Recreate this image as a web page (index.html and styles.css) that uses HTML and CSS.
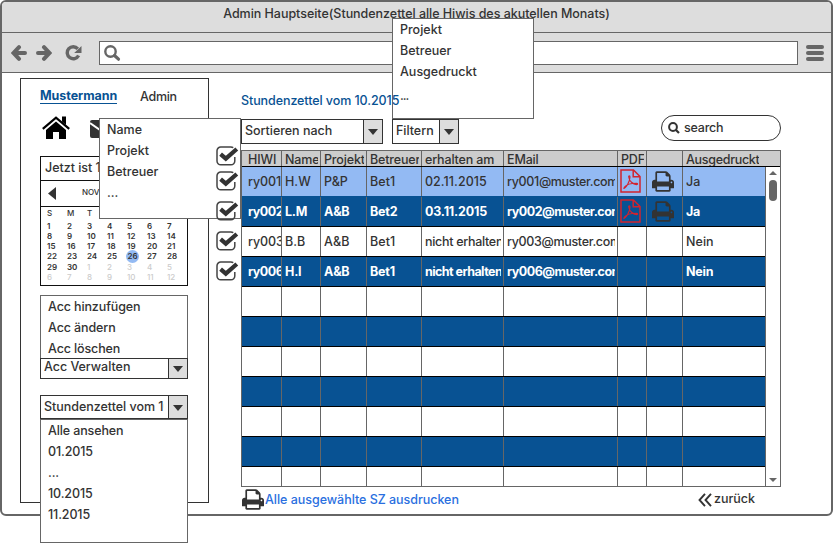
FILE: index.html
```html
<!DOCTYPE html>
<html lang="de">
<head>
<meta charset="utf-8">
<title>Admin Hauptseite</title>
<link rel="stylesheet" href="styles.css">
</head>
<body>
<svg class="defs" width="0" height="0">
  <symbol id="check" viewBox="0 0 23 20">
    <path d="M18.800 11v4a3.800 3.800 0 0 1-3.800 3.800H4.800A3.800 3.800 0 0 1 1 15V4.800A3.800 3.800 0 0 1 4.800 1h10q1.500 0 2.500.6" fill="none" stroke="#444" stroke-width="1.500"/>
    <path d="M4.600 8.200l5.200 4.500L20.800 3" fill="none" stroke="#333" stroke-width="4.200"/>
  </symbol>
  <symbol id="print" viewBox="0 128 1664 1536">
    <path fill="#333" d="M384 1536h896v-256h-896v256zm0-640h896v-384h-160q-40 0-68-28t-28-68v-160h-640v640zm1152 64q0-26-19-45t-45-19-45 19-19 45 19 45 45 19 45-19 19-45zm128 0v416q0 13-9.500 22.500t-22.500 9.500h-224v160q0 40-28 68t-68 28h-960q-40 0-68-28t-28-68v-160h-224q-13 0-22.500-9.500t-9.500-22.500v-416q0-79 56.500-135.500t135.500-56.500h64v-544q0-40 28-68t68-28h672q40 0 88 20t76 48l152 152q28 28 48 76t20 88v256h64q79 0 135.500 56.500t56.500 135.500z"/>
  </symbol>
  <symbol id="pdf" viewBox="0 0 21 24">
    <g fill="none" stroke="#d2232e">
      <path stroke-width="1.500" d="M1 1h12.500l6.500 6.500V23H1zM13.200 1v6.800H20"/>
      <path stroke-width="1.100" d="M4 19.500c1.500-.2 6-6.500 6-11.500 0-1.500-1.500-1.500-1.300 0 .5 4 4.300 7.500 7.800 7.600 1.500 0 1.500-1.200 0-1.300-4 0-10 1.200-12 3.700-.6.900-.8 1.500-.5 1.500z"/>
    </g>
  </symbol>
</svg>

<div class="window">
  <header class="titlebar"><span>Admin Hauptseite(Stundenzettel alle Hiwis des akutellen Monats)</span></header>
  <nav class="toolbar">
    <svg class="nav" width="16" height="16" viewBox="0 0 16 16"><path d="M14 8H3M8 2.200L2.500 8 8 13.800" fill="none" stroke="#666" stroke-width="4" stroke-linecap="round"/></svg>
    <svg class="nav next" width="16" height="16" viewBox="0 0 16 16"><path d="M2 8h11M8 2.200L13.500 8 8 13.800" fill="none" stroke="#666" stroke-width="4" stroke-linecap="round"/></svg>
    <svg class="nav reload" width="17" height="16" viewBox="0 0 17 16"><path d="M12.800 3.800A6 6 0 1 0 13.600 10.500" fill="none" stroke="#666" stroke-width="3.400"/><path d="M16.500 1v7H9.200z" fill="#666"/></svg>
    <div class="address"><svg width="18" height="17" viewBox="0 0 18 17"><circle cx="6.500" cy="6.500" r="5.200" fill="none" stroke="#666" stroke-width="2.400"/><path d="M10.500 10.500l4 3.700" stroke="#666" stroke-width="3.200" stroke-linecap="round"/></svg></div>
    <div class="burger"><i></i><i></i><i></i></div>
  </nav>

  <main class="content">
    <aside class="sidebar">
      <div class="user"><a class="name">Mustermann</a><span class="role">Admin</span></div>
      <div class="shortcuts">
        <svg width="28" height="24" viewBox="0 0 28 24"><path d="M14 5.500L24 14v9h-7v-7h-6v7H4v-9z"/><path d="M.8 12.800L14 1.600l13.200 11.200" fill="none" stroke="#000" stroke-width="2.200"/><path d="M20 .5h4v8.500l-4-3.500z"/></svg>
        <svg class="mail" width="26" height="18" viewBox="0 0 26 18"><rect width="26" height="18" rx="2" fill="#333"/><path d="M0 3l13 9 13-9" fill="none" stroke="#fff" stroke-width="2"/></svg>
      </div>
      <div class="calendar">
        <div class="now">Jetzt ist 1</div>
        <div class="month"><svg width="8" height="13" viewBox="0 0 8 13"><path d="M8 0v13L0 6.500z" fill="#333"/></svg><span>NOV</span></div>
        <div class="days">
          <b>S</b><b>M</b><b>T</b><b>W</b><b>T</b><b>F</b><b>S</b>
          <span>1</span><span>2</span><span>3</span><span>4</span><span>5</span><span>6</span><span>7</span>
          <span>8</span><span>9</span><span>10</span><span>11</span><span>12</span><span>13</span><span>14</span>
          <span>15</span><span>16</span><span>17</span><span>18</span><span>19</span><span>20</span><span>21</span>
          <span>22</span><span>23</span><span>24</span><span>25</span><span class="today">26</span><span>27</span><span>28</span>
          <span>29</span><span>30</span><span class="off">1</span><span class="off">2</span><span class="off">3</span><span class="off">4</span><span class="off">5</span>
          <span class="off">6</span><span class="off">7</span><span class="off">8</span><span class="off">9</span><span class="off">10</span><span class="off">11</span><span class="off">12</span>
        </div>
      </div>
      <ul class="list accounts"><li>Acc hinzufügen</li><li>Acc ändern</li><li>Acc löschen</li></ul>
      <div class="combo verwalten"><span>Acc Verwalten</span><i></i></div>
      <div class="combo period"><span>Stundenzettel vom 10.2015</span><i></i></div>
      <ul class="list periods"><li>Alle ansehen</li><li>01.2015</li><li>...</li><li>10.2015</li><li>11.2015</li></ul>
      <ul class="list menu sort-menu"><li>Name</li><li>Projekt</li><li>Betreuer</li><li>...</li></ul>
    </aside>

    <div class="checks">
      <svg><use href="#check"/></svg><svg><use href="#check"/></svg><svg><use href="#check"/></svg><svg><use href="#check"/></svg><svg><use href="#check"/></svg>
    </div>

    <section class="main">
      <h1>Stundenzettel vom 10.2015</h1>
      <div class="filters">
        <div class="combo sort"><span>Sortieren nach</span><i></i></div>
        <div class="combo filter"><span>Filtern</span><i></i>
          <ul class="list menu filter-menu"><li>Projekt</li><li>Betreuer</li><li>Ausgedruckt</li><li class="dots">...</li></ul>
        </div>
        <div class="search"><svg width="12" height="12" viewBox="0 0 12 12"><circle cx="5" cy="5" r="3.900" fill="none" stroke="#333" stroke-width="2"/><path d="M8 8l3 3" stroke="#333" stroke-width="2.200"/></svg><span>search</span></div>
      </div>
      <div class="table">
        <div class="row head"><div><span>HIWI</span></div><div><span>Name</span></div><div><span>Projekt</span></div><div><span>Betreuer</span></div><div><span>erhalten am</span></div><div><span>EMail</span></div><div><span>PDF</span></div><div></div><div><span>Ausgedruckt</span></div></div>
        <div class="grid">
          <div class="rows">
            <div class="row selected"><div><span>ry001</span></div><div><span>H.W</span></div><div><span>P&amp;P</span></div><div><span>Bet1</span></div><div><span>02.11.2015</span></div><div class="mailto"><span>ry001@muster.com</span></div><div class="ic"><svg class="pdf"><use href="#pdf"/></svg></div><div class="ic"><svg class="print"><use href="#print"/></svg></div><div><span>Ja</span></div></div>
            <div class="row dark"><div><span>ry002</span></div><div><span>L.M</span></div><div><span>A&amp;B</span></div><div><span>Bet2</span></div><div><span>03.11.2015</span></div><div class="mailto"><span>ry002@muster.com</span></div><div class="ic"><svg class="pdf"><use href="#pdf"/></svg></div><div class="ic"><svg class="print"><use href="#print"/></svg></div><div><span>Ja</span></div></div>
            <div class="row"><div><span>ry003</span></div><div><span>B.B</span></div><div><span>A&amp;B</span></div><div><span>Bet1</span></div><div class="pending"><span>nicht erhalten</span></div><div class="mailto"><span>ry003@muster.com</span></div><div></div><div></div><div><span>Nein</span></div></div>
            <div class="row dark"><div><span>ry006</span></div><div><span>H.I</span></div><div><span>A&amp;B</span></div><div><span>Bet1</span></div><div class="pending"><span>nicht erhalten</span></div><div class="mailto"><span>ry006@muster.com</span></div><div></div><div></div><div><span>Nein</span></div></div>
            <div class="row"><div></div><div></div><div></div><div></div><div></div><div></div><div></div><div></div><div></div></div>
            <div class="row dark"><div></div><div></div><div></div><div></div><div></div><div></div><div></div><div></div><div></div></div>
            <div class="row"><div></div><div></div><div></div><div></div><div></div><div></div><div></div><div></div><div></div></div>
            <div class="row dark"><div></div><div></div><div></div><div></div><div></div><div></div><div></div><div></div><div></div></div>
            <div class="row"><div></div><div></div><div></div><div></div><div></div><div></div><div></div><div></div><div></div></div>
            <div class="row dark"><div></div><div></div><div></div><div></div><div></div><div></div><div></div><div></div><div></div></div>
            <div class="row last"><div></div><div></div><div></div><div></div><div></div><div></div><div></div><div></div><div></div></div>
          </div>
          <div class="scroll"><i class="up"></i><i class="thumb"></i><i class="down"></i></div>
        </div>
      </div>
      <footer class="actions">
        <svg class="print"><use href="#print"/></svg><a class="all">Alle ausgewählte SZ ausdrucken</a>
        <a class="back"><svg width="14" height="14" viewBox="0 0 14 14"><path d="M7 .8L1.500 7 7 13.200M13 .8L7.500 7l5.500 6.200" fill="none" stroke="#333" stroke-width="1.900"/></svg><span>zurück</span></a>
      </footer>
    </section>
  </main>
</div>
</body>
</html>
```
FILE: styles.css
```css
* { box-sizing: border-box; }
body { margin: 0; width: 833px; height: 543px; overflow: hidden; background: #fff; color: #333; font: 500 12.5px/20px Inter, "Open Sans", sans-serif; letter-spacing: -.03px; white-space: nowrap; }
svg { display: block; flex: none; }
.defs { position: absolute; }
ul { list-style: none; margin: 0; padding: 0; }

.window { width: 833px; height: 516px; border: 2px solid #666; border-radius: 6px; background: #fff; }
.titlebar { height: 31px; background: #ddd; border-bottom: 1px solid #666; border-radius: 4px 4px 0 0; text-align: center; line-height: 23px; }
.toolbar { display: flex; align-items: center; height: 40px; background: #ddd; border-bottom: 1px solid #666; padding-left: 9px; }
.nav.next { margin-left: 9px; }
.nav.reload { margin-left: 13px; }
.address { width: 699px; height: 24px; margin-left: 17px; border: 1px solid #666; background: #fff; padding: 3px 0 0 4px; }
.burger { display: flex; flex-direction: column; gap: 2px; width: 18px; margin-left: 8px; }
.burger i { height: 4px; border-radius: 2px; background: #666; }

.content { display: flex; align-items: flex-start; }
.sidebar { position: relative; width: 189px; height: 425px; margin: 5px 0 0 18px; border: 1px solid #333; padding-left: 19px; }
.user { display: flex; height: 36px; align-items: flex-end; }
.name { color: #085293; font-weight: 700; line-height: 14px; height: 15px; margin-bottom: 11px; border-bottom: 1px solid #085293; width: 77px; letter-spacing: -.05px; }
.role { margin: 0 0 8px 23px; letter-spacing: -.3px; }
.shortcuts { display: flex; height: 41px; }
.shortcuts svg { margin: 1px 0 0 2px; }
.shortcuts .mail { margin: 5px 0 0 20px; }
.calendar { width: 148px; height: 130px; border: 1px solid #111; }
.now { height: 24px; padding-left: 4px; line-height: 21px; border-bottom: 1px solid #111; }
.month { display: flex; align-items: center; height: 26px; border-bottom: 1px solid #111; padding-left: 7px; font-size: 8px; }
.month span { margin: -4px 0 0 26px; }
.days { display: grid; grid-template-columns: repeat(7, 20px); grid-template-rows: 14px repeat(3, 10px) 11px 10px 10px; padding-left: 6px; font-size: 8px; line-height: 10px; letter-spacing: 0; font-weight: 600; }
.days b { font-weight: 500; line-height: 13px; }
.days .off { color: #ccc; font-weight: 500; }
.today { background: #93baf3; border-radius: 50%; width: 13px; height: 13px; line-height: 13px; margin: -1px 0 0 -1px; text-align: center; }

.list { background: #fff; border: 1px solid #666; letter-spacing: -.12px; }
.list li { height: 21px; line-height: 21px; padding-left: 7px; }
.accounts { width: 148px; height: 64px; margin-top: 9px; }
.periods { width: 148px; height: 124px; }
.menu { position: absolute; width: 142px; height: 101px; letter-spacing: 0; }
.sort-menu { left: 78px; top: 39px; }
.filter-menu { left: -1px; top: -102px; }
.list .dots { line-height: 28px; letter-spacing: -1px; }
.sidebar, .filter { z-index: 1; }

.combo { display: flex; height: 25px; background: #fff; border: 1px solid #333; }
.combo > span { flex: 1; overflow: hidden; margin: 0 4px 0 3px; line-height: 22px; }
.combo > i { width: 19px; background: #ddd; border-left: 1px solid #333; display: flex; align-items: center; justify-content: center; }
.combo > i::after { content: ""; border: 5px solid transparent; border-top: 6px solid #333; border-bottom: 0; margin-top: 1px; }
.verwalten { width: 148px; height: 21px; margin-top: -1px; }
.verwalten > span { line-height: 16px; }
.period { width: 148px; margin-top: 16px; height: 24px; }

.checks { position: relative; z-index: 2; width: 23px; margin: 73px 0 0 7px; }
.checks svg { width: 23px; height: 20px; margin-bottom: 10px; }
.checks svg:first-child { margin-bottom: 5px; }

.main { width: 540px; margin-left: 2px; padding-top: 17px; }
h1 { position: relative; z-index: 3; margin: 0; font: inherit; color: #085293; height: 29px; width: 160px; letter-spacing: -.08px; line-height: 21px; }
.filters { display: flex; height: 31px; }
.sort { width: 142px; }
.filter { position: relative; width: 67px; margin-left: 9px; }
.search { display: flex; align-items: center; width: 120px; height: 26px; margin: -4px 0 0 auto; border: 1px solid #333; border-radius: 13px; padding-left: 6px; gap: 4px; letter-spacing: -.2px; }

.table { width: 540px; height: 337px; border: 1px solid #666; }
.row { display: grid; grid-template-columns: 39px 39px 46px 55px 82px 114px 29px 36px 83px; height: 30px; border-bottom: 1px solid #000; line-height: 30px; letter-spacing: .05px; }
.row > div { overflow: hidden; padding: 0 2px 0 3px; border-left: 1px solid #666; }
.row > div:first-child { border-left: 0; padding: 0 0 0 6px; letter-spacing: -.1px; }
.row span { display: block; overflow: hidden; height: 100%; }
.row .mailto { letter-spacing: -.33px; }
.row .pending { letter-spacing: -.3px; }
.row.head { background: #ccc; height: 16px; line-height: 17px; letter-spacing: -.15px; grid-template-columns: 39px 39px 46px 55px 82px 114px 29px 36px 98px; }
.row.head > div:last-child { padding-right: 21px; letter-spacing: -.3px; }
.selected { background: #93baf3; border-bottom-color: #085293; }
.dark { background: #085293; color: #fff; font-weight: 700; letter-spacing: -.2px; }
.dark .mailto, .dark > div:first-child { letter-spacing: -.5px; }
.dark .pending { letter-spacing: -.55px; }
.last { height: 19px; border-bottom: 0; }
.row .ic { padding: 2px 0 0 3px; }
.pdf { width: 21px; height: 24px; margin: 0 0 0 -1px; }
.print { width: 22px; height: 21px; }
.row .print { margin: 2px 0 0 2px; }
.grid { display: flex; }
.rows { width: 523px; }
.scroll { width: 15px; border-left: 1px solid #666; display: flex; flex-direction: column; align-items: center; padding: 4px 0; }
.up { border: 4px solid transparent; border-bottom: 4px solid #666; border-top: 0; }
.thumb { width: 8px; height: 21px; border-radius: 4px; background: #666; margin-top: 5px; }
.down { border: 4px solid transparent; border-top: 4px solid #666; border-bottom: 0; margin-top: auto; }
.actions { display: flex; align-items: flex-start; padding-top: 2px; }
.actions .print { margin: 0 1px; }
.all { color: #2a6fe0; line-height: 22px; }
.back { display: flex; margin-left: auto; margin-right: 26px; gap: 2px; }
.back svg { margin-top: 4px; }
```
